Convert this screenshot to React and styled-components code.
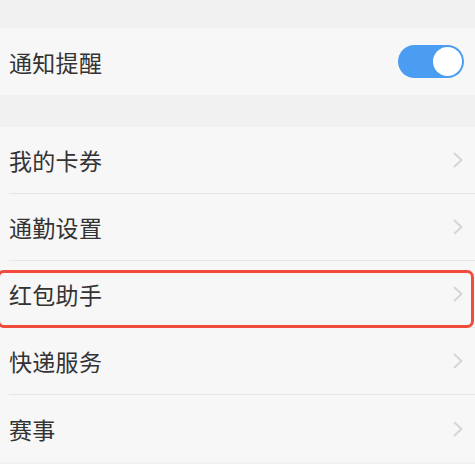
import React, { useState } from "react";
import styled, { createGlobalStyle } from "styled-components";

const GlobalStyle = createGlobalStyle`
  html, body {
    margin: 0;
    padding: 0;
    background: #f1f1f1;
    font-family: "Noto Sans CJK SC", "Noto Sans", sans-serif;
  }
`;

export default function App() {
	const [notify, setNotify] = useState(true);
	const [items] = useState([
		{ id: 1, title: "我的卡券" },
		{ id: 2, title: "通勤设置" },
		{ id: 3, title: "红包助手", marked: true },
		{ id: 4, title: "快递服务" },
		{ id: 5, title: "赛事" },
	]);
	return (
		<Page>
			<GlobalStyle />
			<Group>
				<Row>
					<Label>通知提醒</Label>
					<Toggle className={notify && "on"} onClick={() => setNotify(!notify)}>
						<Knob />
					</Toggle>
				</Row>
			</Group>
			<Group>
				{items.map((item, i) => (
					<Row key={item.id} $divider={i < items.length - 1}>
						<Label>{item.title}</Label>
						<Chevron viewBox="0 0 10 16">
							<path d="M1.5 1.5 L8.5 8 L1.5 14.5" fill="none" stroke="#d4d4d4" strokeWidth="1.8" strokeLinecap="round" strokeLinejoin="round" />
						</Chevron>
						{item.marked && <Highlight />}
					</Row>
				))}
			</Group>
		</Page>
	);
}

const Page = styled.div`
	width: 475px;
	height: 464px;
	overflow: hidden;
	padding-top: 28px;
	box-sizing: border-box;
	background: #f1f1f1;
	display: flex;
	flex-direction: column;
	gap: 32px;
`;
const Group = styled.div`
	background: #f7f7f7;
`;
const Row = styled.div`
	position: relative;
	height: 67px;
	margin-left: 9px;
	padding-right: 12px;
	display: flex;
	align-items: center;
	justify-content: space-between;
	box-sizing: border-box;
	border-bottom: ${(p) => (p.$divider ? "1px solid #e6e6e6" : "none")};
`;
const Label = styled.span`
	font-size: 23px;
	color: #333333;
	letter-spacing: 0.3px;
`;
const Chevron = styled.svg`
	width: 10px;
	height: 16px;
`;
const Toggle = styled.div`
	width: 66px;
	height: 33px;
	border-radius: 17px;
	background: #d9d9d9;
	padding: 2px;
	box-sizing: border-box;
	display: flex;
	justify-content: flex-start;
	margin-right: -1px;
	cursor: pointer;
	&.on {
		background: #4a9df0;
		justify-content: flex-end;
	}
`;
const Knob = styled.div`
	width: 29px;
	height: 29px;
	border-radius: 50%;
	background: #ffffff;
`;
const Highlight = styled.div`
	position: absolute;
	left: -12px;
	right: 1px;
	top: 9px;
	bottom: -1px;
	border: 3px solid #f04b3c;
	border-radius: 7px;
	pointer-events: none;
`;
